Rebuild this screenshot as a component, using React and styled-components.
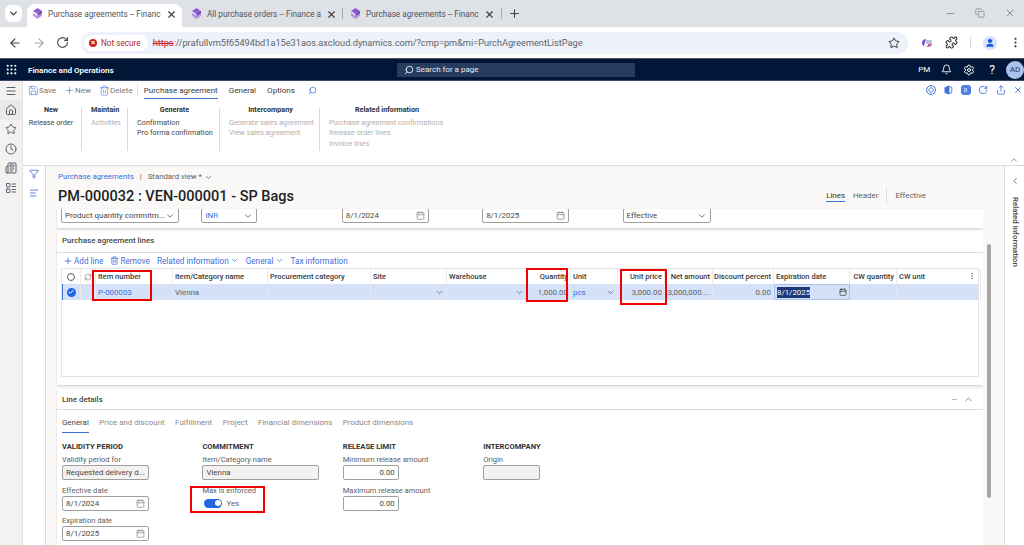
import React from "react"
import styled, { createGlobalStyle } from "styled-components"
import {
  ArrowLeft, ArrowRight, RotateCw, Star, Puzzle, User, MoreVertical, Plus, X, Minus, Copy, Search,
  Bell, Settings, Grip, Menu, Home, Clock, Filter, Save, Trash2, Calendar, ChevronDown,
  ChevronUp, ChevronLeft, RefreshCw, Check, AlignLeft, LayoutList, Newspaper, Share
} from "lucide-react"

const FONT = `Roboto, "Open Sans", "Liberation Sans", sans-serif`
const BLUE = "#3f6fd8"

const GlobalStyle = createGlobalStyle`
  html, body { margin: 0; padding: 0; background: #fff; }
  body { font-family: ${FONT}; color: #323130; overflow: hidden; font-variant-ligatures: none; }
  * { box-sizing: border-box; }
  svg { flex: none; }
`

const columns = [
  { title: "Item number", width: 77 },
  { title: "Item/Category name", width: 95 },
  { title: "Procurement category", width: 103 },
  { title: "Site", width: 76 },
  { title: "Warehouse", width: 80 },
  { title: "Quantity", width: 44, right: true },
  { title: "Unit", width: 47 },
  { title: "Unit price", width: 47, right: true },
  { title: "Net amount", width: 48, right: true },
  { title: "Discount percent", width: 61, right: true },
  { title: "Expiration date", width: 76 },
  { title: "CW quantity", width: 47, right: true },
  { title: "CW unit", width: 84 },
]

const gridTemplate = `19px 15px ${columns.map(c => c.width + "px").join(" ")}`

function TabLogo() {
  return (
    <svg width="11" height="12" viewBox="0 0 11 12">
      <path d="M5.5 0 10 3 5.5 6 1 3z" fill="#8e5bd0" />
      <path d="M1 5l4.5 3L10 5v2.5L5.5 11 1 7.5z" fill="#b78ae8" />
      <path d="M5.5 6 10 3v2L5.5 8z" fill="#5b3fa8" />
    </svg>
  )
}

function CopilotIcon() {
  return (
    <svg width="12" height="12" viewBox="0 0 12 12">
      <path d="M1 6c0-3 2-4 4-4L3 9c-1 0-2-1-2-3z" fill="#7b4fd0" />
      <path d="M4 10c2 0 3-1 3-3h4c0 2-2 3-4 3z" fill="#c060b0" />
      <rect x="5" y="3" width="6" height="4" rx="1" fill="#b8c0d0" />
    </svg>
  )
}

function DiamondRing() {
  return (
    <svg width="10" height="10" viewBox="0 0 10 10" fill="none" stroke={BLUE} strokeWidth="1">
      <circle cx="5" cy="5" r="4.4" />
      <path d="M5 2.4 7.6 5 5 7.6 2.4 5z" />
    </svg>
  )
}

function OfficeIcon() {
  return (
    <svg width="10" height="10" viewBox="0 0 10 10">
      <path d="M1.5 2.4 6 .6v8.8L1.5 7.8z" fill={BLUE} />
      <path d="M6 1.5 8.8 2.2v5.6L6 8.5z" fill="none" stroke={BLUE} strokeWidth=".9" />
    </svg>
  )
}

function BrowserTab({ title, active }) {
  return (
    <Tab $active={active}>
      <TabLogo />
      <TabTitle>{title}</TabTitle>
      <X size={11} strokeWidth={2.4} color="#3c4043" />
    </Tab>
  )
}

function ActionButton({ icon: Icon, label }) {
  return (
    <ActionItem>
      <Icon size={11} color={BLUE} strokeWidth={1.3} />
      <span>{label}</span>
    </ActionItem>
  )
}

function Field({ value, width, label, kind, align, disabled, link }) {
  return (
    <FieldWrap>
      {label && <FieldLabel>{label}</FieldLabel>}
      <FieldBox $width={width} $disabled={disabled} $align={align} $link={link}>
        <FieldValue>{value}</FieldValue>
        {kind === "date" && <Calendar size={9} color="#8a8886" />}
        {kind === "select" && <ChevronDown size={10} color="#605e5c" />}
      </FieldBox>
    </FieldWrap>
  )
}

export default function App() {
  return (
    <Page>
      <GlobalStyle />
      <TabStrip>
        <TabMenu><ChevronDown size={11} strokeWidth={3} /></TabMenu>
        <BrowserTab active title="Purchase agreements -- Financ" />
        <BrowserTab title="All purchase orders -- Finance a" />
        <TabDivider />
        <BrowserTab title="Purchase agreements -- Financ" />
        <TabDivider />
        <NewTab><Plus size={13} strokeWidth={2} /></NewTab>
        <WindowControls>
          <Minus size={11} />
          <Copy size={10} />
          <X size={12} />
        </WindowControls>
      </TabStrip>

      <AddressBar>
        <NavIcons>
          <ArrowLeft size={14} color="#444" />
          <ArrowRight size={14} color="#a8a8a8" />
          <RotateCw size={13} color="#444" />
        </NavIcons>
        <Omnibox>
          <NotSecure>
            <AlertDot>×</AlertDot>
            Not secure
          </NotSecure>
          <Url><Https>https</Https>://prafullvm5f65494bd1a15e31aos.axcloud.dynamics.com/?cmp=pm&amp;mi=PurchAgreementListPage</Url>
          <Star size={12} color="#333" strokeWidth={2} />
        </Omnibox>
        <BrowserTools>
          <CopilotIcon />
          <Puzzle size={13} color="#333" strokeWidth={2} />
          <ToolDivider />
          <ProfileDot><User size={10} color="#0b57d0" fill="#0b57d0" /></ProfileDot>
          <MoreVertical size={13} color="#333" />
        </BrowserTools>
      </AddressBar>

      <NavBar>
        <Grip size={13} color="#fff" />
        <Brand>Finance and Operations</Brand>
        <SearchBox>
          <Search size={10} color="#fff" style={{ transform: "scaleX(-1)" }} />
          Search for a page
        </SearchBox>
        <NavRight>
          <span>PM</span>
          <Bell size={11} color="#fff" />
          <Settings size={12} color="#fff" />
          <HelpGlyph>?</HelpGlyph>
          <Avatar>AD</Avatar>
        </NavRight>
      </NavBar>

      <Shell>
        <Rail>
          <RailItem><Menu size={12} /></RailItem>
          <RailItem $active><Home size={12} /></RailItem>
          <RailItem><Star size={12} /></RailItem>
          <RailItem><Clock size={12} /></RailItem>
          <RailItem><Newspaper size={12} /></RailItem>
          <RailItem><LayoutList size={12} /></RailItem>
        </Rail>

        <Workspace>
          <ActionPane>
            <ActionRow>
              <ActionButton icon={Save} label="Save" />
              <ActionButton icon={Plus} label="New" />
              <ActionButton icon={Trash2} label="Delete" />
              <ActionSep />
              <ActionTab $active>Purchase agreement</ActionTab>
              <ActionTab>General</ActionTab>
              <ActionTab>Options</ActionTab>
              <Search size={9} color={BLUE} style={{ transform: "scaleX(-1)", marginLeft: 2 }} />
              <PaneIcons>
                <DiamondRing />
                <OfficeIcon />
                <BadgeIcon>0</BadgeIcon>
                <RotateCw size={10} />
                <Share size={10} />
                <X size={10} />
              </PaneIcons>
            </ActionRow>
            <GroupRow>
              <Group $width={54} $center>
                <GroupTitle>New</GroupTitle>
                <GroupItem>Release order</GroupItem>
              </Group>
              <Group $width={46}>
                <GroupTitle>Maintain</GroupTitle>
                <GroupItem $off>Activities</GroupItem>
              </Group>
              <Group $width={92}>
                <GroupTitle $center>Generate</GroupTitle>
                <GroupItem>Confirmation</GroupItem>
                <GroupItem>Pro forma confirmation</GroupItem>
              </Group>
              <Group $width={100}>
                <GroupTitle $center>Intercompany</GroupTitle>
                <GroupItem $off>Generate sales agreement</GroupItem>
                <GroupItem $off>View sales agreement</GroupItem>
              </Group>
              <Group $width={132} $last>
                <GroupTitle $center>Related information</GroupTitle>
                <GroupItem $off>Purchase agreement confirmations</GroupItem>
                <GroupItem $off>Release order lines</GroupItem>
                <GroupItem $off>Invoice lines</GroupItem>
              </Group>
            </GroupRow>
            <PaneCollapse><ChevronUp size={10} color="#8a8886" /></PaneCollapse>
          </ActionPane>

          <Lower>
            <FilterPane>
              <Filter size={10} color={BLUE} />
              <AlignLeft size={10} color={BLUE} />
            </FilterPane>

            <FormArea>
              <FormColumn>
                <FormHeader>
                  <HeaderMain>
                    <Breadcrumb>
                      <CrumbLink>Purchase agreements</CrumbLink>
                      <CrumbBar>|</CrumbBar>
                      Standard view *
                      <ChevronDown size={9} />
                    </Breadcrumb>
                    <Title>PM-000032 : VEN-000001 - SP Bags</Title>
                  </HeaderMain>
                  <ViewTabs>
                    <ViewTab $active>Lines</ViewTab>
                    <ViewTab>Header</ViewTab>
                    <ViewDivider />
                    <ViewTab>Effective</ViewTab>
                  </ViewTabs>
                </FormHeader>

                <TopCard>
                  <Field width={118} value="Product quantity commitm..." kind="select" />
                  <Field width={56} value="INR" kind="select" link />
                  <Field width={87} value="8/1/2024" kind="date" />
                  <Field width={87} value="8/1/2025" kind="date" />
                  <Field width={88} value="Effective" kind="select" />
                </TopCard>

                <LinesCard>
                  <CardTitle>Purchase agreement lines</CardTitle>
                  <GridToolbar>
                    <ToolLink><Plus size={10} />Add line</ToolLink>
                    <ToolLink><Trash2 size={9} />Remove</ToolLink>
                    <ToolLink>Related information<ChevronDown size={9} /></ToolLink>
                    <ToolLink>General<ChevronDown size={9} /></ToolLink>
                    <ToolLink>Tax information</ToolLink>
                  </GridToolbar>
                  <GridFrame>
                    <HeadRow>
                      <SelectCell><Radio /></SelectCell>
                      <SelectCell><RefreshCw size={8} color="#8a8886" /></SelectCell>
                      {columns.map(c => (
                        <HeadCell key={c.title} $right={c.right}>{c.title}</HeadCell>
                      ))}
                      <ColumnMenu><MoreVertical size={8} color="#605e5c" /></ColumnMenu>
                    </HeadRow>
                    <DataRow>
                      <SelectCell $marked><RadioOn><Check size={6} color="#fff" strokeWidth={4} /></RadioOn></SelectCell>
                      <SelectCell />
                      <DataCell $link>P-000003</DataCell>
                      <DataCell>Vienna</DataCell>
                      <DataCell />
                      <DataCell $end><ChevronDown size={9} color="#605e5c" /></DataCell>
                      <DataCell $end><ChevronDown size={9} color="#605e5c" /></DataCell>
                      <DataCell $right>1,000.00</DataCell>
                      <DataCell $link $between>pcs<ChevronDown size={9} color="#605e5c" /></DataCell>
                      <DataCell $right>3,000.00</DataCell>
                      <DataCell $right>3,000,000....</DataCell>
                      <DataCell $right>0.00</DataCell>
                      <EditCell><Selected>8/1/2025</Selected><Calendar size={8} color="#323130" /></EditCell>
                      <DataCell />
                      <DataCell />
                    </DataRow>
                  </GridFrame>
                </LinesCard>

                <DetailsCard>
                  <DetailsHead>
                    <CardTitle>Line details</CardTitle>
                    <DetailsTools>
                      <Minus size={7} />
                      <ChevronUp size={11} />
                    </DetailsTools>
                  </DetailsHead>
                  <DetailTabs>
                    <DetailTab $active>General</DetailTab>
                    <DetailTab>Price and discount</DetailTab>
                    <DetailTab>Fulfillment</DetailTab>
                    <DetailTab>Project</DetailTab>
                    <DetailTab>Financial dimensions</DetailTab>
                    <DetailTab>Product dimensions</DetailTab>
                  </DetailTabs>
                  <DetailGrid>
                    <DetailGroup>
                      <GroupHeading>VALIDITY PERIOD</GroupHeading>
                      <Field label="Validity period for" width={87} value="Requested delivery d..." disabled />
                      <Field label="Effective date" width={87} value="8/1/2024" kind="date" />
                      <Field label="Expiration date" width={87} value="8/1/2025" kind="date" />
                    </DetailGroup>
                    <DetailGroup>
                      <GroupHeading>COMMITMENT</GroupHeading>
                      <Field label="Item/Category name" width={117} value="Vienna" disabled />
                      <FieldWrap>
                        <FieldLabel>Max is enforced</FieldLabel>
                        <ToggleRow>
                          <Toggle />
                          Yes
                        </ToggleRow>
                      </FieldWrap>
                    </DetailGroup>
                    <DetailGroup>
                      <GroupHeading>RELEASE LIMIT</GroupHeading>
                      <Field label="Minimum release amount" width={56} value="0.00" align="right" />
                      <Field label="Maximum release amount" width={56} value="0.00" align="right" />
                    </DetailGroup>
                    <DetailGroup>
                      <GroupHeading>INTERCOMPANY</GroupHeading>
                      <Field label="Origin" width={57} value="" disabled />
                    </DetailGroup>
                  </DetailGrid>
                </DetailsCard>
              </FormColumn>
              <ScrollGutter><ScrollThumb /></ScrollGutter>
            </FormArea>

            <RelatedPane>
              <ChevronLeft size={10} color="#605e5c" />
              <RelatedLabel>Related information</RelatedLabel>
            </RelatedPane>
          </Lower>
        </Workspace>
      </Shell>

      <Annotation $x={92} $y={270} $w={60} $h={31} />
      <Annotation $x={526} $y={268} $w={42} $h={34} />
      <Annotation $x={620} $y={269} $w={47} $h={36} />
      <Annotation $x={190} $y={486} $w={75} $h={27} />
    </Page>
  )
}

const Page = styled.div`
  position: relative;
  width: 1024px;
  height: 546px;
  overflow: hidden;
  display: flex;
  flex-direction: column;
  font-size: 8px;
`

const TabStrip = styled.div`
  height: 27px;
  flex: none;
  background: #dee1e6;
  display: flex;
  align-items: flex-end;
  padding-left: 5px;
  color: #3c4043;
`

const TabMenu = styled.div`
  width: 17px;
  height: 17px;
  margin-bottom: 5px;
  margin-right: 5px;
  border-radius: 6px;
  background: #fff;
  display: flex;
  align-items: center;
  justify-content: center;
`

const Tab = styled.div`
  width: 155px;
  height: 23px;
  padding: 0 5px 3px 5px;
  margin-right: ${p => (p.$active ? "4px" : "0")};
  display: flex;
  align-items: center;
  gap: 5px;
  font-size: 8.2px;
  color: #50545a;
  background: ${p => (p.$active ? "#fff" : "transparent")};
  border-radius: 8px 8px 0 0;
`

const TabTitle = styled.span`
  flex: 1;
  white-space: nowrap;
`

const TabDivider = styled.div`
  width: 1px;
  height: 11px;
  margin: 0 2px 8px 1px;
  background: #a8abb0;
`

const NewTab = styled.div`
  display: flex;
  margin: 0 0 7px 4px;
`

const WindowControls = styled.div`
  margin-left: auto;
  margin-bottom: 8px;
  padding-right: 8px;
  display: flex;
  align-items: center;
  gap: 19px;
  color: #8b8e93;
`

const AddressBar = styled.div`
  height: 31px;
  flex: none;
  background: #fff;
  display: flex;
  align-items: center;
  padding-left: 8px;
`

const NavIcons = styled.div`
  width: 73px;
  display: flex;
  align-items: center;
  gap: 10px;
`

const Omnibox = styled.div`
  width: 827px;
  height: 22px;
  border-radius: 11px;
  background: #edf2fa;
  display: flex;
  align-items: center;
  padding: 0 8px 0 3px;
`

const NotSecure = styled.div`
  height: 16px;
  padding: 0 7px 0 5px;
  border-radius: 8px;
  background: #fff;
  display: flex;
  align-items: center;
  gap: 4px;
  font-size: 8.2px;
  color: #b3261e;
`

const AlertDot = styled.span`
  width: 8px;
  height: 8px;
  border-radius: 50%;
  background: #c5221f;
  color: #fff;
  font-size: 8px;
  line-height: 8px;
  text-align: center;
  font-weight: 700;
`

const Url = styled.div`
  flex: 1;
  padding-left: 5px;
  font-size: 9.2px;
  color: #5f6368;
  white-space: nowrap;
`

const Https = styled.span`
  color: #c5221f;
  text-decoration: line-through;
`

const BrowserTools = styled.div`
  flex: 1;
  display: flex;
  align-items: center;
  padding-left: 13px;
  gap: 12px;
`

const ToolDivider = styled.div`
  width: 1px;
  height: 11px;
  background: #d5d8dc;
`

const ProfileDot = styled.div`
  width: 14px;
  height: 14px;
  border-radius: 50%;
  background: #d3e3fd;
  display: flex;
  align-items: center;
  justify-content: center;
`

const NavBar = styled.div`
  height: 23px;
  flex: none;
  background: #001737;
  border-top: 1px solid #555;
  border-bottom: 1px solid #3a4a62;
  display: flex;
  align-items: center;
  padding-left: 5px;
  color: #fff;
`

const Brand = styled.div`
  width: 86px;
  margin-left: 10px;
  font-size: 8.1px;
  font-weight: 600;
  white-space: nowrap;
`

const SearchBox = styled.div`
  margin-left: 283px;
  width: 238px;
  height: 14px;
  flex: none;
  padding-left: 7px;
  border-radius: 1px;
  background: #263d5f;
  display: flex;
  align-items: center;
  gap: 2px;
  font-size: 8px;
  color: #e8ecf2;
`

const NavRight = styled.div`
  margin-left: auto;
  display: flex;
  align-items: center;
  gap: 11px;
  font-size: 8px;
`

const HelpGlyph = styled.span`
  margin: 0 0 0 3px;
  font-size: 12px;
  line-height: 12px;
`

const Avatar = styled.div`
  width: 18px;
  height: 18px;
  border-radius: 50%;
  background: #a9c1ee;
  color: #28374f;
  font-size: 8px;
  display: flex;
  align-items: center;
  justify-content: center;
`

const Shell = styled.div`
  flex: 1;
  min-height: 0;
  display: flex;
`

const Rail = styled.div`
  width: 23px;
  flex: none;
  background: #f3f2f1;
  display: flex;
  flex-direction: column;
  color: #55606e;
  border-right: 1px solid #e4e2e0;
  border-bottom: 1px solid #d5d3d1;
`

const RailItem = styled.div`
  height: 19.4px;
  display: flex;
  align-items: center;
  justify-content: center;
  background: ${p => (p.$active ? "#ebe9e7" : "transparent")};
`

const Workspace = styled.div`
  flex: 1;
  min-width: 0;
  display: flex;
  flex-direction: column;
`

const ActionPane = styled.div`
  position: relative;
  height: 85px;
  flex: none;
  background: #fff;
  border-bottom: 1px solid #dedcda;
  padding-left: 5px;
`

const ActionRow = styled.div`
  height: 18px;
  display: flex;
  align-items: center;
`

const ActionItem = styled.div`
  display: flex;
  align-items: center;
  margin-right: 8px;
  font-size: 8px;
  color: #797775;
`

const ActionSep = styled.div`
  width: 1px;
  height: 12px;
  margin: 0 6px 0 -4px;
  background: #e1dfdd;
`

const ActionTab = styled.div`
  height: 18px;
  margin-right: 11px;
  display: flex;
  align-items: center;
  font-size: 8.05px;
  color: #3b3a39;
  white-space: nowrap;
  box-shadow: ${p => (p.$active ? `inset 0 -1px 0 ${BLUE}` : "none")};
`

const PaneIcons = styled.div`
  margin-left: auto;
  padding-right: 1px;
  display: flex;
  align-items: center;
  gap: 7.5px;
  color: ${BLUE};
`

const BadgeIcon = styled.div`
  width: 10px;
  height: 10px;
  border-radius: 3px;
  background: #4f7fe4;
  color: #fff;
  font-size: 6px;
  line-height: 9px;
  text-align: center;
`

const GroupRow = styled.div`
  display: flex;
  padding-top: 9px;
`

const Group = styled.div`
  width: ${p => p.$width}px;
  height: 43px;
  padding: 0 7px 0 ${p => (p.$center ? "0" : "9px")};
  border-right: ${p => (p.$last ? "none" : "1px solid #dcdad8")};
  text-align: ${p => (p.$center ? "center" : "left")};
  flex: none;
`

const GroupTitle = styled.div`
  height: 13px;
  margin-top: -3.5px;
  font-size: 7.2px;
  font-weight: 700;
  line-height: 9px;
  color: #323130;
  white-space: nowrap;
  text-align: ${p => (p.$center ? "center" : "inherit")};
`

const GroupItem = styled.div`
  height: 10.7px;
  font-size: 7.3px;
  line-height: 10.7px;
  white-space: nowrap;
  color: ${p => (p.$off ? "#b3b0ad" : "#484644")};
`

const PaneCollapse = styled.div`
  position: absolute;
  right: 5px;
  bottom: 0;
  line-height: 0;
`

const Lower = styled.div`
  flex: 1;
  min-height: 0;
  display: flex;
  border-bottom: 1px solid #d5d3d1;
`

const FilterPane = styled.div`
  width: 23px;
  flex: none;
  background: #fff;
  border-right: 1px solid #dedcda;
  padding-top: 3px;
  display: flex;
  flex-direction: column;
  align-items: center;
  gap: 9px;
`

const FormArea = styled.div`
  flex: 1;
  min-width: 0;
  display: flex;
  background: #faf9f8;
`

const FormColumn = styled.div`
  width: 937px;
  flex: none;
  display: flex;
  flex-direction: column;
  overflow: hidden;
  padding-left: 11px;
`

const FormHeader = styled.div`
  height: 43px;
  flex: none;
  display: flex;
  justify-content: space-between;
`

const HeaderMain = styled.div`
  padding: 6px 0 0 1px;
`

const Breadcrumb = styled.div`
  display: flex;
  align-items: center;
  gap: 2px;
  font-size: 7.8px;
  line-height: 10px;
  color: #605e5c;
`

const CrumbLink = styled.span`
  color: ${BLUE};
`

const CrumbBar = styled.span`
  margin: 0 4px 0 4px;
`

const Title = styled.h1`
  margin: 5px 0 0;
  font-size: 14.5px;
  line-height: 19px;
  font-weight: 500;
  color: #201f1e;
  white-space: nowrap;
`

const ViewTabs = styled.div`
  display: flex;
  align-items: center;
  align-self: flex-end;
  height: 17px;
  margin-bottom: 5px;
  padding-right: 57px;
  gap: 8px;
`

const ViewTab = styled.span`
  font-size: 7.9px;
  line-height: 11px;
  color: ${p => (p.$active ? "#323130" : "#605e5c")};
  border-bottom: ${p => (p.$active ? `1px solid ${BLUE}` : "1px solid transparent")};
`

const ViewDivider = styled.div`
  width: 1px;
  height: 17px;
  background: #e1dfdd;
`

const Card = styled.section`
  background: #fff;
  box-shadow: 0 1px 2px rgba(0, 0, 0, 0.18);
  flex: none;
`

const FieldWrap = styled.div`
  display: flex;
  flex-direction: column;
`

const TopCard = styled(Card)`
  height: 19px;
  margin-bottom: 3px;
  padding-left: 4px;
  display: grid;
  grid-template-columns: repeat(5, 140.4px);
  align-items: start;
  overflow: hidden;

  ${FieldWrap} {
    margin-top: -1px;
  }
`

const FieldLabel = styled.label`
  height: 10px;
  font-size: 7.55px;
  line-height: 10px;
  color: #605e5c;
  white-space: nowrap;
`

const FieldBox = styled.div`
  width: ${p => p.$width}px;
  height: 15px;
  padding: 0 3px;
  border: 1px solid #a19f9d;
  border-radius: 2px;
  background: ${p => (p.$disabled ? "#f3f2f1" : "#fff")};
  display: flex;
  align-items: center;
  justify-content: space-between;
  font-size: 7.9px;
  color: ${p => (p.$link ? BLUE : "#484644")};
  text-align: ${p => p.$align || "left"};
`

const FieldValue = styled.span`
  flex: 1;
  white-space: nowrap;
`

const CardTitle = styled.h2`
  margin: 0;
  font-size: 7.95px;
  line-height: 10px;
  font-weight: 500;
  color: #484644;
`

const LinesCard = styled(Card)`
  height: 154px;
  margin-bottom: 4px;
  padding: 0 4px;
  display: flex;
  flex-direction: column;

  & > ${CardTitle} {
    margin: 0 -4px;
    padding: 5px 5px 0;
    height: 22px;
    border-bottom: 1px solid #dedcda;
  }
`

const GridToolbar = styled.div`
  height: 15px;
  display: flex;
  align-items: center;
  padding-left: 2px;
  gap: 7px;
`

const ToolLink = styled.span`
  display: inline-flex;
  align-items: center;
  gap: 1px;
  font-size: 8.2px;
  color: ${BLUE};
  white-space: nowrap;
`

const GridFrame = styled.div`
  width: 918px;
  height: 109px;
  border: 1px solid #e6e4e2;
`

const HeadRow = styled.div`
  position: relative;
  height: 15px;
  display: grid;
  grid-template-columns: ${gridTemplate};
`

const SelectCell = styled.div`
  display: flex;
  align-items: center;
  justify-content: center;
  border-right: 1px solid #edebe9;
  box-shadow: ${p => (p.$marked ? `inset 1px 0 0 ${BLUE}` : "none")};
`

const HeadCell = styled.div`
  padding: 0 2px;
  display: flex;
  align-items: center;
  justify-content: ${p => (p.$right ? "flex-end" : "flex-start")};
  border-right: 1px solid #edebe9;
  font-size: 7.5px;
  font-weight: 500;
  color: #3b3a39;
  white-space: nowrap;
`

const ColumnMenu = styled.div`
  position: absolute;
  right: 2px;
  top: 3px;
  line-height: 0;
`

const DataRow = styled.div`
  height: 16px;
  display: grid;
  grid-template-columns: ${gridTemplate};
  background: #d4e1f8;
`

const DataCell = styled.div`
  padding: 0 2px;
  display: flex;
  align-items: center;
  justify-content: ${p => (p.$right || p.$end ? "flex-end" : p.$between ? "space-between" : "flex-start")};
  border-right: 1px solid #e3e8f2;
  font-size: 7.9px;
  color: ${p => (p.$link ? BLUE : "#605e5c")};
  white-space: nowrap;
`

const EditCell = styled(DataCell)`
  justify-content: space-between;
  border: 1px solid #a9c2ec;
`

const Selected = styled.span`
  background: #1a3a7c;
  color: #fff;
  line-height: 11px;
`

const Radio = styled.span`
  width: 8px;
  height: 8px;
  border: 1px solid #605e5c;
  border-radius: 50%;
`

const RadioOn = styled.span`
  width: 9px;
  height: 9px;
  border-radius: 50%;
  background: #2266e3;
  display: flex;
  align-items: center;
  justify-content: center;
`

const DetailsCard = styled(Card)`
  flex: 1;
  min-height: 0;
`

const DetailsHead = styled.div`
  height: 21px;
  padding: 1px 9px 0 5px;
  border-bottom: 1px solid #dedcda;
  display: flex;
  align-items: center;
  justify-content: space-between;
`

const DetailsTools = styled.div`
  display: flex;
  align-items: center;
  gap: 5px;
  color: #8a8886;
`

const DetailTabs = styled.div`
  height: 22px;
  padding: 6px 0 0 5px;
  display: flex;
  gap: 10.5px;
`

const DetailTab = styled.div`
  height: 17px;
  font-size: 7.9px;
  line-height: 14px;
  color: ${p => (p.$active ? "#484644" : "#8a8886")};
  box-shadow: ${p => (p.$active ? `inset 0 -1px 0 ${BLUE}` : "none")};
`

const DetailGrid = styled.div`
  padding: 10px 0 0 5px;
  display: grid;
  grid-template-columns: repeat(4, 140.4px);
`

const DetailGroup = styled.div`
  display: flex;
  flex-direction: column;

  ${FieldWrap} {
    height: 30.5px;
  }
`

const GroupHeading = styled.div`
  height: 13px;
  font-size: 7.6px;
  line-height: 10px;
  font-weight: 700;
  color: #323130;
  white-space: nowrap;
`

const ToggleRow = styled.div`
  display: flex;
  align-items: center;
  gap: 4px;
  height: 15px;
  padding-left: 2px;
  font-size: 7.9px;
  color: #605e5c;
`

const Toggle = styled.span`
  position: relative;
  width: 18px;
  height: 9px;
  border-radius: 5px;
  background: #2266e3;

  &::after {
    content: "";
    position: absolute;
    right: 1.5px;
    top: 1.5px;
    width: 6px;
    height: 6px;
    border-radius: 50%;
    background: #fff;
  }
`

const ScrollGutter = styled.div`
  flex: 1;
  padding: 78px 0 0 4px;
`

const ScrollThumb = styled.div`
  width: 4px;
  height: 254px;
  border-radius: 2px;
  background: #a8a6a4;
`

const RelatedPane = styled.div`
  width: 20px;
  flex: none;
  background: #fff;
  border-left: 1px solid #e1dfdd;
  padding-top: 10px;
  display: flex;
  flex-direction: column;
  align-items: center;
`

const RelatedLabel = styled.div`
  margin: 11px 0 0 2px;
  writing-mode: vertical-rl;
  font-size: 7.9px;
  font-weight: 500;
  color: #484644;
  white-space: nowrap;
`

const Annotation = styled.div`
  position: absolute;
  left: ${p => p.$x}px;
  top: ${p => p.$y}px;
  width: ${p => p.$w}px;
  height: ${p => p.$h}px;
  border: 2px solid #f00000;
`
